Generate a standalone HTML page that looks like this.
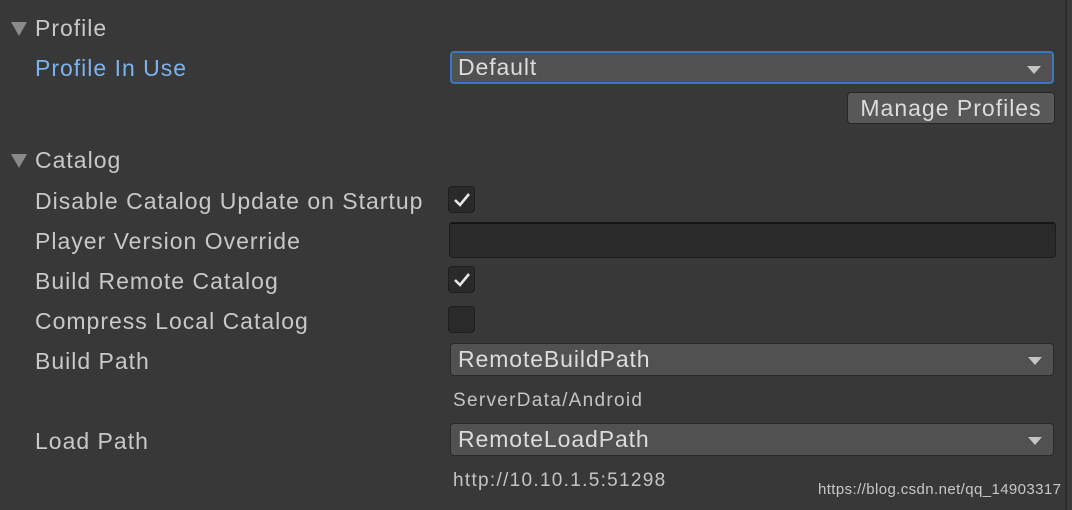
<!DOCTYPE html>
<html><head><style>
body{margin:0;width:1072px;height:510px;background:#383838;font-family:"Liberation Sans",sans-serif;color:#c8c8c8;position:relative;overflow:hidden}
.a{position:absolute;white-space:nowrap}
.l{font-size:23px;letter-spacing:1px;left:35px;line-height:26px}
.dd{position:absolute;left:450px;width:604px;height:33px;background:#515151;border:1px solid #2a2a2a;border-radius:4px;box-sizing:border-box;font-size:23px;letter-spacing:0.9px;color:#dcdcdc;line-height:31px;padding-left:7px}
.dd:after{content:"";position:absolute;right:11px;top:13px;border-left:7px solid transparent;border-right:7px solid transparent;border-top:8px solid #c4c4c4}
.cb{position:absolute;left:448px;width:27px;height:27px;background:#2a2a2a;border:1px solid #1e1e1e;border-radius:4px;box-sizing:border-box}
.cb svg{position:absolute;left:3px;top:3px}
.s{font-size:19px;letter-spacing:1.3px;left:453px;color:#c4c4c4}
.tri{position:absolute;left:11px;border-left:8px solid transparent;border-right:8px solid transparent;border-top:14px solid #8a8a8a}
</style></head><body>
<div class="tri" style="top:22px"></div>
<div class="a l" style="top:15px">Profile</div>
<div class="a l" style="top:55px;color:#7bb2f0">Profile In Use</div>
<div class="dd" style="top:51px;border:2px solid #3a78c0;line-height:29px;padding-left:6px">Default</div>
<div class="a" style="left:847px;top:92px;width:208px;height:32px;background:#585858;border:1px solid #262626;border-radius:4px;box-sizing:border-box;font-size:23px;letter-spacing:1px;color:#dcdcdc;text-align:center;line-height:30px">Manage Profiles</div>
<div class="tri" style="top:154px"></div>
<div class="a l" style="top:147px">Catalog</div>
<div class="a l" style="top:188px">Disable Catalog Update on Startup</div>
<div class="cb" style="top:186px"><svg width="20" height="20"><path d="M3 10 L8 15 L17 4" stroke="#e6e6e6" stroke-width="2.6" fill="none"/></svg></div>
<div class="a l" style="top:228px">Player Version Override</div>
<div class="a" style="left:449px;top:222px;width:607px;height:36px;background:#2a2a2a;border:1px solid #1c1c1c;border-top:2px solid #151515;border-radius:4px;box-sizing:border-box"></div>
<div class="a l" style="top:268px">Build Remote Catalog</div>
<div class="cb" style="top:266px"><svg width="20" height="20"><path d="M3 10 L8 15 L17 4" stroke="#e6e6e6" stroke-width="2.6" fill="none"/></svg></div>
<div class="a l" style="top:308px">Compress Local Catalog</div>
<div class="cb" style="top:306px"></div>
<div class="a l" style="top:348px">Build Path</div>
<div class="dd" style="top:343px">RemoteBuildPath</div>
<div class="a s" style="top:390px">ServerData/Android</div>
<div class="a l" style="top:428px">Load Path</div>
<div class="dd" style="top:423px">RemoteLoadPath</div>
<div class="a s" style="top:470px">http://10.10.1.5:51298</div>
<div class="a" style="left:818px;top:481px;font-size:15px;letter-spacing:0.4px;color:#c8c8c8">https://blog.csdn.net/qq_14903317</div>
<div class="a" style="left:1065px;top:0;width:2px;height:510px;background:#2c2c2c"></div>
<div class="a" style="left:1067px;top:0;width:5px;height:510px;background:#3a3a3a"></div>
</body></html>
